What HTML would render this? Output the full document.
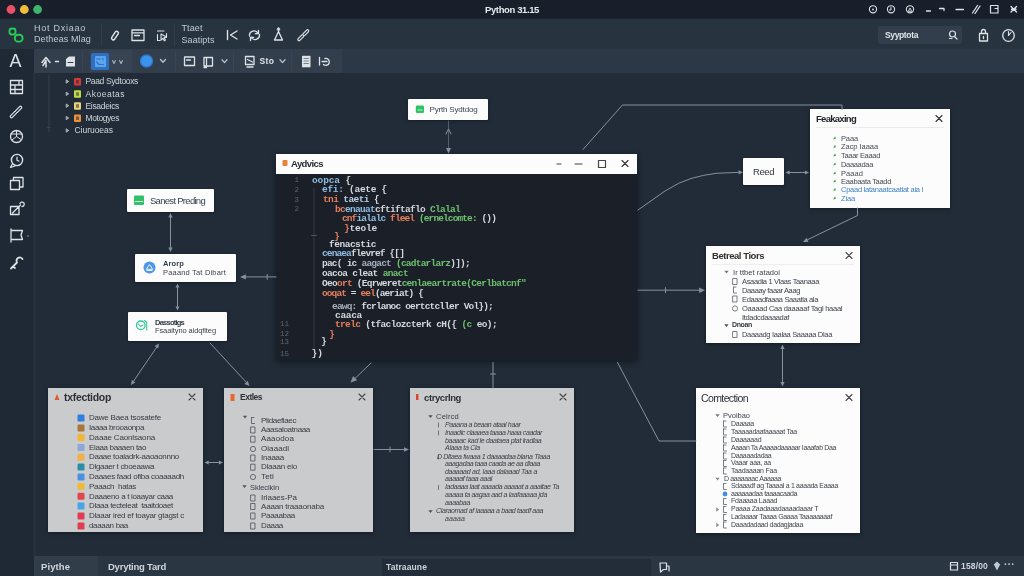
<!DOCTYPE html>
<html lang="en">
<head>
<meta charset="utf-8">
<title>Python 31.15</title>
<style>
html,body{margin:0;padding:0;background:#212c38;}
body{width:1024px;height:576px;overflow:hidden;position:relative;font-family:"Liberation Sans",sans-serif;}
#app{position:absolute;left:0;top:0;width:1024px;height:576px;overflow:hidden;background:#212c38;will-change:transform;}
#app>div{position:absolute;}
#app>svg{position:absolute;left:0;top:0;}
.t{position:absolute;white-space:pre;margin:0;padding:0;}
.m{font-family:"Liberation Mono",monospace;}
.s{font-family:"Liberation Sans",sans-serif;}
</style>
</head>
<body>
<div id="app">
<div style="left:0px;top:0px;width:1024px;height:18px;background:#181e2a;"></div>
<div style="left:0px;top:18px;width:1024px;height:31px;background:#27333f;"></div>
<div style="left:0px;top:17.5px;width:1024px;height:1.5px;background:#1c2430;"></div>
<div style="left:33px;top:49px;width:991px;height:24px;background:#2c3845;"></div>
<div style="left:33px;top:49px;width:309px;height:24px;background:#323e4c;"></div>
<div style="left:0px;top:49px;width:33.5px;height:527px;background:#1f2935;"></div>
<div style="left:33px;top:73px;width:2.5px;height:483px;background:#25303c;"></div>
<div style="left:34px;top:556px;width:990px;height:20px;background:#2b3643;"></div>
<div style="left:34px;top:556px;width:64px;height:20px;background:#323d4a;"></div>
<div style="left:381.5px;top:559px;width:269px;height:17px;background:#232d3a;border-radius:1px;"></div>
<div style="left:101px;top:23px;width:1px;height:23px;background:#313c49;"></div>
<div style="left:174px;top:23px;width:1px;height:23px;background:#313c49;"></div>
<div style="left:82px;top:51px;width:1px;height:20px;background:#3a4553;"></div>
<div style="left:175px;top:51px;width:1px;height:20px;background:#3a4553;"></div>
<div style="left:233px;top:51px;width:1px;height:20px;background:#3a4553;"></div>
<div style="left:291px;top:51px;width:1px;height:20px;background:#3a4553;"></div>
<div style="left:90px;top:50px;width:42px;height:22px;background:#384453;"></div>
<div style="left:90.5px;top:52.5px;width:18px;height:17px;background:#2f6fc2;border-radius:1.5px;"></div>
<div style="left:94.5px;top:56px;width:11.5px;height:11px;background:#5aa6ee;border-radius:1px;"></div>
<div style="left:878px;top:26px;width:84px;height:18px;background:#323e4c;border-radius:2px;"></div>
<div style="left:408px;top:99px;width:80px;height:21px;background:#fcfcfd;box-shadow:0 1px 3px rgba(0,0,0,.35);border-radius:1px;"></div>
<div style="left:127px;top:189px;width:87px;height:23px;background:#fcfcfd;box-shadow:0 1px 3px rgba(0,0,0,.35);border-radius:1px;"></div>
<div style="left:135px;top:254px;width:101px;height:28px;background:#fcfcfd;box-shadow:0 1px 3px rgba(0,0,0,.35);border-radius:1px;"></div>
<div style="left:128px;top:312px;width:99px;height:29px;background:#fcfcfd;box-shadow:0 1px 3px rgba(0,0,0,.35);border-radius:1px;"></div>
<div style="left:743px;top:158px;width:41px;height:27px;background:#fcfcfd;box-shadow:0 1px 3px rgba(0,0,0,.35);border-radius:1px;"></div>
<div style="left:48px;top:388px;width:155px;height:144px;background:#c9cbcd;box-shadow:0 1px 4px rgba(0,0,0,.4);"></div>
<div style="left:224px;top:388px;width:149px;height:144px;background:#c9cbcd;box-shadow:0 1px 4px rgba(0,0,0,.4);"></div>
<div style="left:410px;top:388px;width:164px;height:144px;background:#c9cbcd;box-shadow:0 1px 4px rgba(0,0,0,.4);"></div>
<div style="left:810px;top:109px;width:140px;height:99px;background:#fcfcfd;box-shadow:0 1px 4px rgba(0,0,0,.4);"></div>
<div style="left:816px;top:127px;width:128px;height:1px;background:#ececee;"></div>
<div style="left:706px;top:246px;width:154px;height:97px;background:#fcfcfd;box-shadow:0 1px 4px rgba(0,0,0,.4);"></div>
<div style="left:712px;top:264px;width:142px;height:1px;background:#eeeeef;"></div>
<div style="left:696px;top:388px;width:164px;height:145px;background:#fcfcfd;box-shadow:0 1px 4px rgba(0,0,0,.4);"></div>
<div style="left:276px;top:154px;width:361px;height:206px;background:#1b2028;box-shadow:0 2px 6px rgba(0,0,0,.45);"></div>
<div style="left:276px;top:154px;width:361px;height:20px;background:#fcfcfd;"></div>
<svg width="1024" height="576" viewBox="0 0 1024 576" fill="none">
<circle cx="11" cy="9.5" r="4.4" fill="#ec5068"/>
<circle cx="24.3" cy="9.5" r="4.4" fill="#f3bd3a"/>
<circle cx="37.6" cy="9.5" r="4.4" fill="#3fb56c"/>
<rect x="9.500" y="28.500" width="6" height="6" rx="2.500" stroke="#27cc55" stroke-width="1.900"/>
<rect x="14.800" y="34.800" width="7.800" height="6.800" rx="3.200" stroke="#27cc55" stroke-width="1.900"/>
<path d="M10.5 80.5h12v13h-12z M10.5 85h12 M10.5 89.5h12 M15 85v8.5 M19 80.5v4.5" stroke="#dde2e7" stroke-width="1.3" fill="none" stroke-linecap="round" stroke-linejoin="round" />
<path d="M11.5 116.5l4-4 M16.5 111.5l4-4" stroke="#dde2e7" stroke-width="3.6" fill="none" stroke-linecap="round" stroke-linejoin="round" />
<path d="M11.5 116.5l4-4 M16.5 111.5l4-4" stroke="#1f2935" stroke-width="1.2" fill="none" stroke-linecap="round" stroke-linejoin="round" />
<circle cx="16.5" cy="136.5" r="6" stroke="#dde2e7" stroke-width="1.3"/>
<path d="M16.5 130.5v6l4.5 3 M16.5 136.5l-4.5 3.5 M11 134h11" stroke="#dde2e7" stroke-width="1.0" fill="none" stroke-linecap="round" stroke-linejoin="round" />
<circle cx="17" cy="160" r="5.6" stroke="#dde2e7" stroke-width="1.4"/>
<path d="M12.5 163.5l-2 4 4.5-1.5 M17 157v3.2l2 1" stroke="#dde2e7" stroke-width="1.2" fill="none" stroke-linecap="round" stroke-linejoin="round" />
<path d="M10.5 180.5h9v9h-9z M13.5 180.5v-3h9.5v9.5h-3.500" stroke="#dde2e7" stroke-width="1.3" fill="none" stroke-linecap="round" stroke-linejoin="round" />
<path d="M10.5 206.5h8.500v8h-8.500z M12.500 213l8-8 M20 203.500a2.200 2.200 0 1 1 2 3" stroke="#dde2e7" stroke-width="1.3" fill="none" stroke-linecap="round" stroke-linejoin="round" />
<path d="M11 230.500h11.500l-1.500 4.500 1.500 4.500h-11.500z M11 229v13" stroke="#dde2e7" stroke-width="1.3" fill="none" stroke-linecap="round" stroke-linejoin="round" />
<path d="M11 268.500l6-6 M17 262.500a3.200 3.200 0 0 1 5.500-3.500 M13 266.500l2 1.500" stroke="#dde2e7" stroke-width="1.8" fill="none" stroke-linecap="round" stroke-linejoin="round" />
<circle cx="28" cy="236" r="0.8" fill="#dde2e7" opacity=".6"/>
<path d="M111.800 37.300l3.600-5.400a1.700 1.700 0 0 1 2.800 1.900l-3.600 5.400a1.700 1.700 0 0 1-2.800-1.900z" stroke="#dde2e7" stroke-width="1.5" fill="none" stroke-linecap="round" stroke-linejoin="round" />
<path d="M132 30h12v10.500h-12z M132 32.800h12 M134.500 35.500h5" stroke="#dde2e7" stroke-width="1.3" fill="none" stroke-linecap="round" stroke-linejoin="round" />
<path d="M157.500 31h6.500 M166.500 33.500v4 M160 40.500h-2.500v-6 M161 34l5.500 3-2.500.600 1.500 2.500-1.200.700-1.500-2.500-1.800 1.800z" stroke="#dde2e7" stroke-width="1.1" fill="none" stroke-linecap="round" stroke-linejoin="round" />
<path d="M227.500 30.500v9 M237 31l-6.500 4 6.500 4" stroke="#dde2e7" stroke-width="1.4" fill="none" stroke-linecap="round" stroke-linejoin="round" />
<path d="M249.500 36a4.500 4.500 0 0 1 8.500-2.500 M259.500 34.500a4.500 4.500 0 0 1-8.500 2.500 M258.500 30.500v3.200h-3.200 M250.500 40.500v-3.200h3.200" stroke="#dde2e7" stroke-width="1.3" fill="none" stroke-linecap="round" stroke-linejoin="round" />
<path d="M278.500 31.500l-4 8.500h8z M278.500 28.200v3.300 M274.500 40h8" stroke="#dde2e7" stroke-width="1.3" fill="none" stroke-linecap="round" stroke-linejoin="round" />
<circle cx="278.500" cy="29.200" r="1.300" stroke="#dde2e7" stroke-width="1"/>
<path d="M299 39.500l3.500-3.500 M304 34.500l3.500-3.500" stroke="#dde2e7" stroke-width="3.6" fill="none" stroke-linecap="round" stroke-linejoin="round" />
<path d="M299 39.500l3.500-3.500 M304 34.500l3.500-3.500" stroke="#27333f" stroke-width="1.2" fill="none" stroke-linecap="round" stroke-linejoin="round" />
<path d="M46 67v-6.500 M42 62.500l4-5 4 5 M46 60.500l-3 5" stroke="#dde2e7" stroke-width="1.5" fill="none" stroke-linecap="round" stroke-linejoin="round" />
<path d="M55.500 61.500h3" stroke="#dde2e7" stroke-width="1.4" fill="none" stroke-linecap="round" stroke-linejoin="round" />
<path d="M66 59l3-2.500h6v10h-9z" fill="#dde2e7"/>
<path d="M68 62.500h5" stroke="#323e4c" stroke-width="1.0" fill="none" stroke-linecap="round" stroke-linejoin="round" />
<path d="M96.500 59h4 M96.500 62l2.500 2.500h4.500 M103 58v2" stroke="#2f6fc2" stroke-width="1.1" fill="none" stroke-linecap="round" stroke-linejoin="round" />
<path d="M112.500 60.500l1.500 3 1.500-3 M119.500 60.500l1.500 3 1.500-3" stroke="#aab3bd" stroke-width="1.1" fill="none" stroke-linecap="round" stroke-linejoin="round" />
<circle cx="146.500" cy="61" r="6.100" fill="#3b93ee" stroke="#2d74c8" stroke-width="1.200"/>
<path d="M160.500 59.500l2.500 2.800 2.500-2.800" stroke="#b8c0c9" stroke-width="1.3" fill="none" stroke-linecap="round" stroke-linejoin="round" />
<path d="M184.500 57h10v8.500h-10z M186.500 60h4" stroke="#dde2e7" stroke-width="1.3" fill="none" stroke-linecap="round" stroke-linejoin="round" />
<path d="M204 57.500h8.500v8.500h-8.500z M206.500 57.500v10 M206.500 67.500h-2.500" stroke="#dde2e7" stroke-width="1.3" fill="none" stroke-linecap="round" stroke-linejoin="round" />
<path d="M222 59.800l2.500 2.800 2.500-2.800" stroke="#b8c0c9" stroke-width="1.3" fill="none" stroke-linecap="round" stroke-linejoin="round" />
<path d="M245.500 56.500h8.500v8h-8.500z M247.500 59.500l5 2.500 M247 67h6" stroke="#dde2e7" stroke-width="1.3" fill="none" stroke-linecap="round" stroke-linejoin="round" />
<path d="M280 59.800l2.500 2.800 2.500-2.800" stroke="#b8c0c9" stroke-width="1.3" fill="none" stroke-linecap="round" stroke-linejoin="round" />
<path d="M302 55.800h8.500v11.500h-8.500z" fill="#dde2e7"/>
<path d="M304 58.500h4.500 M304 61h4.500 M304 63.500h4.500" stroke="#6c7783" stroke-width="0.9" fill="none" stroke-linecap="round" stroke-linejoin="round" />
<path d="M319.500 57.500v7.500 M322 61.500h5 M325 58.500a3.500 3.500 0 1 1-1.500 6" stroke="#dde2e7" stroke-width="1.3" fill="none" stroke-linecap="round" stroke-linejoin="round" />
<circle cx="873" cy="9.300" r="3.600" stroke="#dde2e7" stroke-width="1.100"/>
<circle cx="891" cy="9.300" r="3.600" stroke="#dde2e7" stroke-width="1.100"/>
<circle cx="910" cy="9.300" r="3.600" stroke="#dde2e7" stroke-width="1.100"/>
<circle cx="873" cy="9.500" r="0.900" fill="#dde2e7"/>
<path d="M891 7.500v2.500h-1.500" stroke="#dde2e7" stroke-width="1.0" fill="none" stroke-linecap="round" stroke-linejoin="round" />
<path d="M908.500 11l1.500-3 1.500 3z" stroke="#dde2e7" stroke-width="0.9" fill="none" stroke-linecap="round" stroke-linejoin="round" />
<path d="M926.500 11h4 M939.500 8.500h4.500v2 M956 9.500h7.500" stroke="#dde2e7" stroke-width="1.3" fill="none" stroke-linecap="round" stroke-linejoin="round" />
<path d="M972.500 13l5-7.500 M975 13.500l5-7.500" stroke="#dde2e7" stroke-width="1.3" fill="none" stroke-linecap="round" stroke-linejoin="round" />
<path d="M990.500 5.500h7.500v7.500h-7.500z M995 8.500h3" stroke="#dde2e7" stroke-width="1.2" fill="none" stroke-linecap="round" stroke-linejoin="round" />
<path d="M1011 6.500l5.500 5.500 M1016.500 6.500l-5.500 5.500 M1011.500 9.300h4.500" stroke="#dde2e7" stroke-width="1.4" fill="none" stroke-linecap="round" stroke-linejoin="round" />
<circle cx="952.500" cy="34" r="3" stroke="#dde2e7" stroke-width="1.200"/>
<path d="M954.500 36.500l2.500 2.500 M949.500 38.500h2.500" stroke="#dde2e7" stroke-width="1.2" fill="none" stroke-linecap="round" stroke-linejoin="round" />
<path d="M979.500 33.500h8v7.500h-8z M981.500 33.500v-2a2 2 0 0 1 4 0v2 M983.500 36.500v2" stroke="#dde2e7" stroke-width="1.3" fill="none" stroke-linecap="round" stroke-linejoin="round" />
<circle cx="1008.500" cy="35.500" r="5.800" stroke="#dde2e7" stroke-width="1.300"/>
<path d="M1008.500 35.500v-4 M1008.500 35.500l2.500-3" stroke="#dde2e7" stroke-width="1.1" fill="none" stroke-linecap="round" stroke-linejoin="round" />
<path d="M660 563h6.500v6.500h-3l-3 2.500z M666.500 566h2.500v5" stroke="#dde2e7" stroke-width="1.2" fill="none" stroke-linecap="round" stroke-linejoin="round" />
<path d="M950.500 562.500h7v7.500h-7z M950.500 565h7" stroke="#dde2e7" stroke-width="1.2" fill="none" stroke-linecap="round" stroke-linejoin="round" />
<path d="M997 561.500l3.200 3-3.200 6-3.200-6z" fill="#c2c9d0"/>
<path d="M49 75v57 M47.500 127.500h3" stroke="#3d4855" stroke-width="0.8" fill="none" stroke-linecap="round" stroke-linejoin="round" />
<path d="M66.5 80.0l2.200 1.500-2.200 1.500z" stroke="#aab2bb" stroke-width="0.9" fill="#aab2bb" stroke-linecap="round" stroke-linejoin="round" />
<rect x="74" y="78.0" width="7" height="7.500" rx="1" fill="#d8383a"/>
<rect x="76" y="80.0" width="3" height="3.500" fill="#212c38" opacity=".55"/>
<path d="M66.5 92.3l2.200 1.500-2.200 1.500z" stroke="#aab2bb" stroke-width="0.9" fill="#aab2bb" stroke-linecap="round" stroke-linejoin="round" />
<rect x="74" y="90.3" width="7" height="7.500" rx="1" fill="#c5dc48"/>
<rect x="76" y="92.3" width="3" height="3.500" fill="#212c38" opacity=".55"/>
<path d="M66.5 104.2l2.200 1.500-2.200 1.500z" stroke="#aab2bb" stroke-width="0.9" fill="#aab2bb" stroke-linecap="round" stroke-linejoin="round" />
<rect x="74" y="102.2" width="7" height="7.500" rx="1" fill="#ecd07a"/>
<rect x="76" y="104.2" width="3" height="3.500" fill="#212c38" opacity=".55"/>
<path d="M66.5 116.5l2.200 1.500-2.200 1.500z" stroke="#aab2bb" stroke-width="0.9" fill="#aab2bb" stroke-linecap="round" stroke-linejoin="round" />
<rect x="74" y="114.5" width="7" height="7.500" rx="1" fill="#f0903a"/>
<rect x="76" y="116.5" width="3" height="3.500" fill="#212c38" opacity=".55"/>
<path d="M66.5 129.0l2.200 1.500-2.200 1.500z" stroke="#aab2bb" stroke-width="0.9" fill="#aab2bb" stroke-linecap="round" stroke-linejoin="round" />
<path d="M448.500 120.500V148" stroke="#8491a0" stroke-width="0.900" opacity=".55"/>
<path d="M446 134l2.500-5 2.500 5" stroke="#8491a0" stroke-width="1.0" fill="none" stroke-linecap="round" stroke-linejoin="round"/>
<path d="M448.5 153.5L446.0 148.1L451.0 148.1z" fill="#8491a0"/>
<path d="M583 149.500l39.500-44.500h219.500v4.500" stroke="#8491a0" stroke-width="1.0" fill="none" stroke-linecap="round" stroke-linejoin="round"/>
<path d="M638 210L665 191Q679 182 691 178.500T716 173.300L738 172.400" stroke="#8491a0" stroke-width="1.0" fill="none" stroke-linecap="round" stroke-linejoin="round"/>
<path d="M743.0 172.3L738.5 174.4L738.5 170.2z" fill="#8491a0"/>
<path d="M788 172.500h18" stroke="#8491a0" stroke-width="1.0" fill="none" stroke-linecap="round" stroke-linejoin="round"/>
<path d="M785.5 172.5L789.6 170.6L789.6 174.4z" fill="#8491a0"/>
<path d="M809.0 172.5L804.9 174.4L804.9 170.6z" fill="#8491a0"/>
<path d="M857.500 208v7.500L806 240.500" stroke="#8491a0" stroke-width="1.0" fill="none" stroke-linecap="round" stroke-linejoin="round"/>
<path d="M803.0 242.0L806.5 237.7L808.5 241.9z" fill="#8491a0"/>
<path d="M638 290.200h62 M665.500 287.700v5" stroke="#8491a0" stroke-width="1.0" fill="none" stroke-linecap="round" stroke-linejoin="round"/>
<path d="M705.0 290.2L699.1 292.9L699.1 287.5z" fill="#8491a0"/>
<path d="M782.500 347v37" stroke="#8491a0" stroke-width="1.0" fill="none" stroke-linecap="round" stroke-linejoin="round"/>
<path d="M782.5 344.5L784.6 349.0L780.4 349.0z" fill="#8491a0"/>
<path d="M782.5 386.5L780.4 382.0L784.6 382.0z" fill="#8491a0"/>
<path d="M617.500 362.500L659 441H696" stroke="#8491a0" stroke-width="1.0" fill="none" stroke-linecap="round" stroke-linejoin="round"/>
<path d="M493 362.500V388 M490.500 374h5" stroke="#8491a0" stroke-width="1.0" fill="none" stroke-linecap="round" stroke-linejoin="round"/>
<path d="M371 363L354 379.500" stroke="#8491a0" stroke-width="1.0" fill="none" stroke-linecap="round" stroke-linejoin="round"/>
<path d="M350.5 382.5L353.1 376.0L357.2 380.3z" fill="#8491a0"/>
<path d="M276 276.900h-31 M267.200 274.400v5" stroke="#8491a0" stroke-width="1.0" fill="none" stroke-linecap="round" stroke-linejoin="round"/>
<path d="M240.0 276.9L245.9 274.2L245.9 279.6z" fill="#8491a0"/>
<path d="M170.500 216v32" stroke="#8491a0" stroke-width="1.0" fill="none" stroke-linecap="round" stroke-linejoin="round"/>
<path d="M170.5 213.0L172.6 217.5L168.4 217.5z" fill="#8491a0"/>
<path d="M170.5 252.0L168.4 247.5L172.6 247.5z" fill="#8491a0"/>
<path d="M177.500 285v24" stroke="#8491a0" stroke-width="1.0" fill="none" stroke-linecap="round" stroke-linejoin="round"/>
<path d="M177.5 283.5L179.4 287.6L175.6 287.6z" fill="#8491a0"/>
<path d="M177.5 310.5L175.6 306.4L179.4 306.4z" fill="#8491a0"/>
<path d="M157.500 346L133 382" stroke="#8491a0" stroke-width="1.0" fill="none" stroke-linecap="round" stroke-linejoin="round"/>
<path d="M159.0 343.5L158.2 348.4L154.7 346.1z" fill="#8491a0"/>
<path d="M131.0 385.0L131.8 380.1L135.3 382.4z" fill="#8491a0"/>
<path d="M210 343l37 40" stroke="#8491a0" stroke-width="1.0" fill="none" stroke-linecap="round" stroke-linejoin="round"/>
<path d="M249.5 386.0L244.4 383.9L247.8 380.8z" fill="#8491a0"/>
<path d="M207 462.500h14" stroke="#8491a0" stroke-width="1.0" fill="none" stroke-linecap="round" stroke-linejoin="round"/>
<path d="M204.5 462.5L208.6 460.6L208.6 464.4z" fill="#8491a0"/>
<path d="M223.0 462.5L218.9 464.4L218.9 460.6z" fill="#8491a0"/>
<path d="M374 449.500h31 M390 447v5" stroke="#8491a0" stroke-width="1.0" fill="none" stroke-linecap="round" stroke-linejoin="round"/>
<path d="M409.0 449.5L404.0 451.8L404.0 447.2z" fill="#8491a0"/>
<rect x="415.800" y="105.500" width="8.200" height="7.600" rx="1.300" fill="#2fc266"/>
<path d="M418 110h4" stroke="#bff0cf" stroke-width="1.1" fill="none" stroke-linecap="round" stroke-linejoin="round" />
<rect x="134" y="195.500" width="10" height="9.500" rx="1" fill="#2fc266"/>
<path d="M135.500 201.500h7" stroke="#e9fbef" stroke-width="1.2" fill="none" stroke-linecap="round" stroke-linejoin="round" />
<circle cx="149.500" cy="267.500" r="6" fill="#4d97e8"/>
<path d="M146.500 269l3-4.500 3 4.500z M147 270.500h5" stroke="#e6f1fc" stroke-width="1.0" fill="none" stroke-linecap="round" stroke-linejoin="round" />
<circle cx="140.800" cy="325.300" r="4.300" stroke="#35c79a" stroke-width="1.300"/>
<path d="M144.500 320.500l2.200 2v7.500 M138.500 324l2 2.500 2.500-1.500" stroke="#35c79a" stroke-width="1.1" fill="none" stroke-linecap="round" stroke-linejoin="round" />
<path d="M54.500 400l2.500-6 2.500 6z" fill="#e5582f"/>
<path d="M189 394l6 6 M195 394l-6 6" stroke="#444" stroke-width="1.1" fill="none" stroke-linecap="round" stroke-linejoin="round" />
<rect x="77.500" y="414.5" width="7" height="7" rx="1.200" fill="#2f7fe0"/>
<rect x="77.500" y="424.5" width="7" height="7" rx="1.200" fill="#a9773a"/>
<rect x="77.500" y="434.0" width="7" height="7" rx="1.200" fill="#f2b632"/>
<rect x="77.500" y="444.0" width="7" height="7" rx="1.200" fill="#8fa6d8"/>
<rect x="77.500" y="453.7" width="7" height="7" rx="1.200" fill="#f0b04a"/>
<rect x="77.500" y="463.5" width="7" height="7" rx="1.200" fill="#2c8ea6"/>
<rect x="77.500" y="473.5" width="7" height="7" rx="1.200" fill="#4a90e2"/>
<rect x="77.500" y="483.0" width="7" height="7" rx="1.200" fill="#f0b93a"/>
<rect x="77.500" y="492.8" width="7" height="7" rx="1.200" fill="#e0474c"/>
<rect x="77.500" y="502.5" width="7" height="7" rx="1.200" fill="#45a5e6"/>
<rect x="77.500" y="512.5" width="7" height="7" rx="1.200" fill="#e23c50"/>
<rect x="77.500" y="522.5" width="7" height="7" rx="1.200" fill="#e23c50"/>
<path d="M230.500 394h4v7h-4z" fill="#e5682f"/>
<path d="M359 394l6 6 M365 394l-6 6" stroke="#444" stroke-width="1.1" fill="none" stroke-linecap="round" stroke-linejoin="round" />
<path d="M242.8 415.8h4.400l-2.200 2.800z" fill="#555"/>
<path d="M251.5 417.5v6h3 M251.5 417.5h2.500" stroke="#5a5f66" stroke-width="0.9" fill="none" stroke-linecap="round" stroke-linejoin="round" />
<path d="M251 427h4v6h-4z" stroke="#5a5f66" stroke-width="0.9" fill="none" stroke-linecap="round" stroke-linejoin="round" />
<path d="M251 436.2h4v6h-4z" stroke="#5a5f66" stroke-width="0.9" fill="none" stroke-linecap="round" stroke-linejoin="round" />
<circle cx="253" cy="449" r="2.600" stroke="#5a5f66" stroke-width="0.900"/>
<path d="M251 455h4v6h-4z" stroke="#5a5f66" stroke-width="0.9" fill="none" stroke-linecap="round" stroke-linejoin="round" />
<path d="M251 464.2h4v6h-4z" stroke="#5a5f66" stroke-width="0.9" fill="none" stroke-linecap="round" stroke-linejoin="round" />
<circle cx="253" cy="477" r="2.600" stroke="#5a5f66" stroke-width="0.900"/>
<path d="M242.3 485.3h4.400l-2.200 2.800z" fill="#555"/>
<path d="M251 495h4v6h-4z" stroke="#5a5f66" stroke-width="0.9" fill="none" stroke-linecap="round" stroke-linejoin="round" />
<path d="M251 503.5h4v6h-4z" stroke="#5a5f66" stroke-width="0.9" fill="none" stroke-linecap="round" stroke-linejoin="round" />
<path d="M251 513h4v6h-4z" stroke="#5a5f66" stroke-width="0.9" fill="none" stroke-linecap="round" stroke-linejoin="round" />
<path d="M251 523h4v6h-4z" stroke="#5a5f66" stroke-width="0.9" fill="none" stroke-linecap="round" stroke-linejoin="round" />
<path d="M416 394h2.500v6h-2.500z" fill="#d8482f"/>
<path d="M560 394l6 6 M566 394l-6 6" stroke="#444" stroke-width="1.1" fill="none" stroke-linecap="round" stroke-linejoin="round" />
<path d="M428.3 415.3h4.400l-2.200 2.800z" fill="#555"/>
<path d="M428.3 510.3h4.400l-2.200 2.800z" fill="#555"/>
<path d="M438.500 423v4" stroke="#666" stroke-width="0.9" fill="none" stroke-linecap="round" stroke-linejoin="round" />
<path d="M438.500 431v4" stroke="#666" stroke-width="0.9" fill="none" stroke-linecap="round" stroke-linejoin="round" />
<path d="M438.500 455v4" stroke="#666" stroke-width="0.9" fill="none" stroke-linecap="round" stroke-linejoin="round" />
<path d="M438.500 485.5v4" stroke="#666" stroke-width="0.9" fill="none" stroke-linecap="round" stroke-linejoin="round" />
<path d="M936 115.5l6 6 M942 115.5l-6 6" stroke="#333" stroke-width="1.1" fill="none" stroke-linecap="round" stroke-linejoin="round" />
<path d="M833 139.5l2.200-3.200 .8 2.400z" fill="#4da65a"/>
<path d="M833 148.0l2.200-3.200 .8 2.400z" fill="#4da65a"/>
<path d="M833 156.5l2.200-3.200 .8 2.400z" fill="#4da65a"/>
<path d="M833 165.5l2.200-3.200 .8 2.400z" fill="#4da65a"/>
<path d="M833 174.5l2.200-3.200 .8 2.400z" fill="#4da65a"/>
<path d="M833 182.5l2.200-3.200 .8 2.400z" fill="#4da65a"/>
<path d="M833 191.0l2.200-3.200 .8 2.400z" fill="#4da65a"/>
<path d="M833 199.5l2.200-3.200 .8 2.400z" fill="#4da65a"/>
<path d="M846 252.5l6 6 M852 252.5l-6 6" stroke="#444" stroke-width="1.1" fill="none" stroke-linecap="round" stroke-linejoin="round" />
<path d="M724.3 270.8h4.400l-2.200 2.800z" fill="#777"/>
<path d="M733 278.5h4v6h-4z" stroke="#6a6f77" stroke-width="0.9" fill="none" stroke-linecap="round" stroke-linejoin="round" />
<path d="M733.5 287v6h3 M733.5 287h2.500" stroke="#6a6f77" stroke-width="0.9" fill="none" stroke-linecap="round" stroke-linejoin="round" />
<path d="M733 296h4v6h-4z" stroke="#6a6f77" stroke-width="0.9" fill="none" stroke-linecap="round" stroke-linejoin="round" />
<circle cx="735" cy="308.5" r="2.600" stroke="#6a6f77" stroke-width="0.900"/>
<path d="M733 331.5h4v6h-4z" stroke="#6a6f77" stroke-width="0.9" fill="none" stroke-linecap="round" stroke-linejoin="round" />
<path d="M724.3 324.3h4.400l-2.200 2.800z" fill="#555"/>
<path d="M846 394.5l6 6 M852 394.5l-6 6" stroke="#444" stroke-width="1.1" fill="none" stroke-linecap="round" stroke-linejoin="round" />
<path d="M715.3 414.3h4.400l-2.200 2.800z" fill="#777"/>
<path d="M723.5 421v6h3 M723.5 421h2.500" stroke="#6a6f77" stroke-width="0.9" fill="none" stroke-linecap="round" stroke-linejoin="round" />
<path d="M723.5 429v6h3 M723.5 429h2.500" stroke="#6a6f77" stroke-width="0.9" fill="none" stroke-linecap="round" stroke-linejoin="round" />
<path d="M723.5 437v6h3 M723.5 437h2.500" stroke="#6a6f77" stroke-width="0.9" fill="none" stroke-linecap="round" stroke-linejoin="round" />
<path d="M723.5 445v6h3 M723.5 445h2.500" stroke="#6a6f77" stroke-width="0.9" fill="none" stroke-linecap="round" stroke-linejoin="round" />
<path d="M723.5 453v6h3 M723.5 453h2.500" stroke="#6a6f77" stroke-width="0.9" fill="none" stroke-linecap="round" stroke-linejoin="round" />
<path d="M723.5 460.5v6h3 M723.5 460.5h2.500" stroke="#6a6f77" stroke-width="0.9" fill="none" stroke-linecap="round" stroke-linejoin="round" />
<path d="M723.5 468v6h3 M723.5 468h2.500" stroke="#6a6f77" stroke-width="0.9" fill="none" stroke-linecap="round" stroke-linejoin="round" />
<path d="M715.3 477.8h4.400l-2.200 2.800z" fill="#888"/>
<path d="M723.5 483.5v6h3 M723.5 483.5h2.500" stroke="#6a6f77" stroke-width="0.9" fill="none" stroke-linecap="round" stroke-linejoin="round" />
<circle cx="725" cy="494" r="2.400" fill="#3f8fe0"/>
<path d="M723.5 498.5v6h3 M723.5 498.5h2.500" stroke="#6a6f77" stroke-width="0.9" fill="none" stroke-linecap="round" stroke-linejoin="round" />
<path d="M723.5 506.5v6h3 M723.5 506.5h2.500" stroke="#6a6f77" stroke-width="0.9" fill="none" stroke-linecap="round" stroke-linejoin="round" />
<path d="M716.3 507.3v4.400l2.800-2.200z" fill="#888"/>
<path d="M723.5 514.5v6h3 M723.5 514.5h2.500" stroke="#6a6f77" stroke-width="0.9" fill="none" stroke-linecap="round" stroke-linejoin="round" />
<path d="M723.5 522v6h3 M723.5 522h2.500" stroke="#6a6f77" stroke-width="0.9" fill="none" stroke-linecap="round" stroke-linejoin="round" />
<path d="M716.3 522.8v4.400l2.800-2.200z" fill="#888"/>
<rect x="282.500" y="160" width="5" height="6" rx="1" fill="#e5843a"/>
<path d="M557 164h4 M575 164h7 M598.500 160.500h7v7h-7z" stroke="#444" stroke-width="1.2" fill="none" stroke-linecap="round" stroke-linejoin="round" />
<path d="M622 160.5l6 6 M628 160.5l-6 6" stroke="#333" stroke-width="1.1" fill="none" stroke-linecap="round" stroke-linejoin="round" />
<path d="M314 188v162" stroke="#3b434d" stroke-width="0.8" fill="none" stroke-linecap="round" stroke-linejoin="round" />
<path d="M311.500 235.500h5" stroke="#56606b" stroke-width="0.8" fill="none" stroke-linecap="round" stroke-linejoin="round" />
</svg>
<span class="t s" style="left:485px;top:4.3px;font-size:9.5px;line-height:11.4px;font-weight:700;letter-spacing:-0.384px;color:#e8ebef;">Python 31.15</span>
<span class="t s" style="left:34px;top:22.9px;font-size:9px;line-height:10.8px;letter-spacing:0.747px;color:#c2c9d0;">Hot Dxiaao</span>
<span class="t s" style="left:34px;top:34.4px;font-size:9px;line-height:10.8px;letter-spacing:0.122px;color:#c2c9d0;">Detheas Mlag</span>
<span class="t s" style="left:181.5px;top:23.1px;font-size:9px;line-height:10.8px;letter-spacing:0.097px;color:#c2c9d0;">Ttaet</span>
<span class="t s" style="left:181.5px;top:34.6px;font-size:9px;line-height:10.8px;letter-spacing:0.059px;color:#c2c9d0;">Saatipts</span>
<span class="t s" style="left:259.5px;top:56.4px;font-size:8.5px;line-height:10.2px;font-weight:700;letter-spacing:0.432px;color:#dfe3e8;">Sto</span>
<span class="t s" style="left:885px;top:29.9px;font-size:8.5px;line-height:10.2px;font-weight:700;letter-spacing:-0.363px;color:#dfe3e8;">Syyptota</span>
<span class="t s" style="left:41px;top:560.8px;font-size:9.5px;line-height:11.4px;font-weight:700;letter-spacing:0.081px;color:#d0d5db;">Piythe</span>
<span class="t s" style="left:108px;top:560.8px;font-size:9.5px;line-height:11.4px;font-weight:700;letter-spacing:-0.236px;color:#d0d5db;">Dyryting Tard</span>
<span class="t s" style="left:386px;top:561.9px;font-size:8.5px;line-height:10.2px;font-weight:700;letter-spacing:0.111px;color:#cdd3d9;">Tatraaune</span>
<span class="t s" style="left:961px;top:561.4px;font-size:8.5px;line-height:10.2px;font-weight:700;letter-spacing:0.167px;color:#cdd3d9;">158/00</span>
<span class="t s" style="left:1004px;top:559.0px;font-size:10px;line-height:12.0px;font-weight:700;letter-spacing:0.333px;color:#c2c9d0;">···</span>
<span class="t s" style="left:9.5px;top:51.2px;font-size:18px;line-height:21.6px;letter-spacing:1.984px;color:#dde2e7;">A</span>
<span class="t s" style="left:85.5px;top:76.4px;font-size:8.5px;line-height:10.2px;letter-spacing:-0.361px;color:#cfd5db;">Paad Sydtooxs</span>
<span class="t s" style="left:85.5px;top:88.7px;font-size:8.5px;line-height:10.2px;letter-spacing:0.506px;color:#cfd5db;">Akoeatas</span>
<span class="t s" style="left:85.5px;top:100.6px;font-size:8.5px;line-height:10.2px;letter-spacing:-0.321px;color:#cfd5db;">Eisadeics</span>
<span class="t s" style="left:85.5px;top:112.9px;font-size:8.5px;line-height:10.2px;letter-spacing:-0.42px;color:#cfd5db;">Motogyes</span>
<span class="t s" style="left:74.5px;top:125.4px;font-size:8.5px;line-height:10.2px;letter-spacing:-0.028px;color:#cfd5db;">Ciuruoeas</span>
<span class="t s" style="left:429.5px;top:104.7px;font-size:8px;line-height:9.6px;letter-spacing:-0.173px;color:#3a4450;">Pyrth Sydtdog</span>
<span class="t s" style="left:150px;top:194.8px;font-size:9.5px;line-height:11.4px;letter-spacing:-0.712px;color:#3a4450;">Sanest Preding</span>
<span class="t s" style="left:163px;top:259.0px;font-size:7.5px;line-height:9.0px;font-weight:700;letter-spacing:0.116px;color:#333c47;">Arorp</span>
<span class="t s" style="left:163px;top:268.0px;font-size:7.5px;line-height:9.0px;letter-spacing:0.182px;color:#3f4650;">Paaand Tat Dibart</span>
<span class="t s" style="left:155px;top:317.8px;font-size:7.5px;line-height:9.0px;font-weight:700;letter-spacing:-0.762px;color:#333c47;">Dassotigs</span>
<span class="t s" style="left:155px;top:326.0px;font-size:7.5px;line-height:9.0px;letter-spacing:-0.104px;color:#3f4650;">Fsaaityno aidqfiteg</span>
<span class="t s" style="left:753px;top:166.3px;font-size:9.5px;line-height:11.4px;letter-spacing:-0.43px;color:#30353c;">Reed</span>
<span class="t s" style="left:64px;top:391.2px;font-size:10.5px;line-height:12.6px;font-weight:700;letter-spacing:-0.317px;color:#2c3036;">txfectidop</span>
<span class="t s" style="left:89px;top:413.2px;font-size:8px;line-height:9.6px;letter-spacing:-0.213px;color:#383b41;">Dawe Baea tsosatefe</span>
<span class="t s" style="left:89px;top:423.2px;font-size:8px;line-height:9.6px;letter-spacing:-0.367px;color:#383b41;">Iaaaa brooaonpa</span>
<span class="t s" style="left:89px;top:432.7px;font-size:8px;line-height:9.6px;letter-spacing:-0.156px;color:#383b41;">Daaae Caonlsaona</span>
<span class="t s" style="left:89px;top:442.7px;font-size:8px;line-height:9.6px;letter-spacing:-0.358px;color:#383b41;">Eiaaa baaaen tao</span>
<span class="t s" style="left:89px;top:452.4px;font-size:8px;line-height:9.6px;letter-spacing:-0.29px;color:#383b41;">Daaae toaladrk-aaoaonnno</span>
<span class="t s" style="left:89px;top:462.2px;font-size:8px;line-height:9.6px;letter-spacing:-0.33px;color:#383b41;">Dlgaaer t cboeaawa  </span>
<span class="t s" style="left:89px;top:472.2px;font-size:8px;line-height:9.6px;letter-spacing:-0.281px;color:#383b41;">Daaaes faad ofiba coaaaadh</span>
<span class="t s" style="left:89px;top:481.7px;font-size:8px;line-height:9.6px;letter-spacing:-0.32px;color:#383b41;">Paaach  hatas</span>
<span class="t s" style="left:89px;top:491.5px;font-size:8px;line-height:9.6px;letter-spacing:-0.318px;color:#383b41;">Daaaeno a t ioaayar caaa</span>
<span class="t s" style="left:89px;top:501.2px;font-size:8px;line-height:9.6px;letter-spacing:-0.332px;color:#383b41;">Dlaaa tecteleat  taaitdoaet</span>
<span class="t s" style="left:89px;top:511.2px;font-size:8px;line-height:9.6px;letter-spacing:-0.257px;color:#383b41;">Dlaaar ired ef toayar gtagst c</span>
<span class="t s" style="left:89px;top:521.2px;font-size:8px;line-height:9.6px;letter-spacing:-0.327px;color:#383b41;">daaaan baa</span>
<span class="t s" style="left:240px;top:392.4px;font-size:8.5px;line-height:10.2px;font-weight:700;letter-spacing:-0.508px;color:#2c3036;">Extles</span>
<span class="t s" style="left:261px;top:415.7px;font-size:8px;line-height:9.6px;letter-spacing:-0.376px;color:#383b41;">Piidaefiaec</span>
<span class="t s" style="left:261px;top:425.2px;font-size:8px;line-height:9.6px;letter-spacing:-0.338px;color:#383b41;">Aaasaloatnaaa</span>
<span class="t s" style="left:261px;top:434.4px;font-size:8px;line-height:9.6px;letter-spacing:0.138px;color:#383b41;">Aaaodoa</span>
<span class="t s" style="left:261px;top:444.2px;font-size:8px;line-height:9.6px;letter-spacing:0.06px;color:#383b41;">Oiaaadl</span>
<span class="t s" style="left:261px;top:453.2px;font-size:8px;line-height:9.6px;letter-spacing:-0.245px;color:#383b41;">Inaaaa</span>
<span class="t s" style="left:261px;top:462.4px;font-size:8px;line-height:9.6px;letter-spacing:-0.225px;color:#383b41;">Dlaaan eio</span>
<span class="t s" style="left:261px;top:472.2px;font-size:8px;line-height:9.6px;letter-spacing:0.137px;color:#383b41;">Tetl</span>
<span class="t s" style="left:250px;top:482.5px;font-size:7.5px;line-height:9.0px;letter-spacing:-0.066px;color:#3c4148;">Sklecikin</span>
<span class="t s" style="left:261px;top:493.2px;font-size:8px;line-height:9.6px;letter-spacing:-0.047px;color:#383b41;">Irlaaes-Pa</span>
<span class="t s" style="left:261px;top:501.7px;font-size:8px;line-height:9.6px;letter-spacing:-0.178px;color:#383b41;">Aaaan traaaonaba</span>
<span class="t s" style="left:261px;top:511.2px;font-size:8px;line-height:9.6px;letter-spacing:-0.311px;color:#383b41;">Paaaabaa</span>
<span class="t s" style="left:261px;top:521.2px;font-size:8px;line-height:9.6px;letter-spacing:-0.316px;color:#383b41;">Daaaa</span>
<span class="t s" style="left:424px;top:392.3px;font-size:9.5px;line-height:11.4px;font-weight:700;letter-spacing:-0.406px;color:#2c3036;">ctrycrlng</span>
<span class="t s" style="left:436px;top:412.0px;font-size:7.5px;line-height:9.0px;letter-spacing:0.219px;color:#3c4148;">Celrcd</span>
<span class="t s" style="left:445px;top:420.8px;font-size:7px;line-height:8.4px;font-style:italic;letter-spacing:-0.362px;color:#3c4046;">Paaana a beaan ataal haar </span>
<span class="t s" style="left:445px;top:428.8px;font-size:7px;line-height:8.4px;font-style:italic;letter-spacing:-0.375px;color:#3c4046;">Inaadic claaaea taaaa haaa caadar</span>
<span class="t s" style="left:445px;top:436.8px;font-size:7px;line-height:8.4px;font-style:italic;letter-spacing:-0.325px;color:#3c4046;">baaaac kad le daataea ptat lradlaa </span>
<span class="t s" style="left:445px;top:444.3px;font-size:7px;line-height:8.4px;font-style:italic;letter-spacing:-0.262px;color:#3c4046;">Alaaa ta Cla</span>
<span class="t s" style="left:437px;top:452.8px;font-size:7px;line-height:8.4px;font-style:italic;letter-spacing:-0.333px;color:#3c4046;">D Dltaea fwaaa 1 daaaadaa blana Tlaaa</span>
<span class="t s" style="left:445px;top:460.3px;font-size:7px;line-height:8.4px;font-style:italic;letter-spacing:-0.363px;color:#3c4046;">aaagadaa taaa caada ae aa dlaaa</span>
<span class="t s" style="left:445px;top:467.8px;font-size:7px;line-height:8.4px;font-style:italic;letter-spacing:-0.272px;color:#3c4046;">daaaaad ad, laaa dalaaad Taa a</span>
<span class="t s" style="left:445px;top:475.3px;font-size:7px;line-height:8.4px;font-style:italic;letter-spacing:-0.323px;color:#3c4046;">aaaaaf taaa aaal</span>
<span class="t s" style="left:445px;top:483.3px;font-size:7px;line-height:8.4px;font-style:italic;letter-spacing:-0.344px;color:#3c4046;">Iadaaaa laat aaaada aaaaat a aaaitae Ta</span>
<span class="t s" style="left:445px;top:491.3px;font-size:7px;line-height:8.4px;font-style:italic;letter-spacing:-0.297px;color:#3c4046;">aaaaa ta aagaa aad a laafaaaaa jda</span>
<span class="t s" style="left:445px;top:499.3px;font-size:7px;line-height:8.4px;font-style:italic;letter-spacing:-0.324px;color:#3c4046;">aaaabaa</span>
<span class="t s" style="left:436px;top:507.3px;font-size:7px;line-height:8.4px;font-style:italic;letter-spacing:-0.347px;color:#3c4046;">Claraomad af iaaaaa a baad taadf aaa</span>
<span class="t s" style="left:445px;top:514.8px;font-size:7px;line-height:8.4px;font-style:italic;letter-spacing:0.106px;color:#3c4046;">aaaaa</span>
<span class="t s" style="left:816px;top:113.3px;font-size:9.5px;line-height:11.4px;font-weight:700;letter-spacing:-0.719px;color:#22262c;">Feakaxing</span>
<span class="t s" style="left:841px;top:133.5px;font-size:7.5px;line-height:9.0px;letter-spacing:-0.133px;color:#474c54;">Paaa</span>
<span class="t s" style="left:841px;top:142.0px;font-size:7.5px;line-height:9.0px;letter-spacing:-0.053px;color:#474c54;">Zacp Iaaaa</span>
<span class="t s" style="left:841px;top:150.5px;font-size:7.5px;line-height:9.0px;letter-spacing:-0.322px;color:#474c54;">Taaar Eaaad</span>
<span class="t s" style="left:841px;top:159.5px;font-size:7.5px;line-height:9.0px;letter-spacing:-0.328px;color:#474c54;">Daaaadaa</span>
<span class="t s" style="left:841px;top:168.5px;font-size:7.5px;line-height:9.0px;letter-spacing:0.062px;color:#474c54;">Paaad</span>
<span class="t s" style="left:841px;top:176.5px;font-size:7.5px;line-height:9.0px;letter-spacing:-0.321px;color:#474c54;">Eaabaata Taadd</span>
<span class="t s" style="left:841px;top:185.0px;font-size:7.5px;line-height:9.0px;letter-spacing:-0.253px;color:#3f82c4;">Cpaad latanaatcaatlat aia l</span>
<span class="t s" style="left:841px;top:193.5px;font-size:7.5px;line-height:9.0px;letter-spacing:-0.148px;color:#3f82c4;">Ziaa</span>
<span class="t s" style="left:712px;top:250.3px;font-size:9.5px;line-height:11.4px;font-weight:700;letter-spacing:-0.454px;color:#33302e;">Betreal Tiors</span>
<span class="t s" style="left:733px;top:267.5px;font-size:7.5px;line-height:9.0px;letter-spacing:0.045px;color:#3f444b;">Ir ttbet ratadoi</span>
<span class="t s" style="left:742px;top:277.0px;font-size:7.5px;line-height:9.0px;letter-spacing:-0.345px;color:#3f444b;">Asaadia 1 Vlaas Taanaaa</span>
<span class="t s" style="left:742px;top:285.5px;font-size:7.5px;line-height:9.0px;letter-spacing:-0.366px;color:#3f444b;">Daaaay faaar Aaag</span>
<span class="t s" style="left:742px;top:294.5px;font-size:7.5px;line-height:9.0px;letter-spacing:-0.359px;color:#3f444b;">Edaaadfaaaa Saaatla ala</span>
<span class="t s" style="left:742px;top:304.0px;font-size:7.5px;line-height:9.0px;letter-spacing:-0.265px;color:#3f444b;">Oaaaad Caa daaaaaf Tagl haaal </span>
<span class="t s" style="left:742px;top:312.5px;font-size:7.5px;line-height:9.0px;letter-spacing:-0.337px;color:#3f444b;">Itdadcdaaaadaf</span>
<span class="t s" style="left:742px;top:330.0px;font-size:7.5px;line-height:9.0px;letter-spacing:-0.324px;color:#3f444b;">Daaaadg Iaalaa Saaaaa Dlaa</span>
<span class="t s" style="left:732px;top:321.3px;font-size:7px;line-height:8.4px;font-weight:700;letter-spacing:-0.356px;color:#33383f;">Dnoan</span>
<span class="t s" style="left:701px;top:391.7px;font-size:10.5px;line-height:12.6px;letter-spacing:-0.611px;color:#2e3238;">Comtection</span>
<span class="t s" style="left:723px;top:411.0px;font-size:7.5px;line-height:9.0px;letter-spacing:-0.016px;color:#3f444b;">Pvoibao</span>
<span class="t s" style="left:731px;top:419.8px;font-size:7px;line-height:8.4px;letter-spacing:-0.255px;color:#3f444b;">Daaaaa</span>
<span class="t s" style="left:731px;top:427.8px;font-size:7px;line-height:8.4px;letter-spacing:-0.255px;color:#3f444b;">Taaaaadaafaaaaat Taa</span>
<span class="t s" style="left:731px;top:435.8px;font-size:7px;line-height:8.4px;letter-spacing:-0.252px;color:#3f444b;">Daaaaaad </span>
<span class="t s" style="left:731px;top:443.8px;font-size:7px;line-height:8.4px;letter-spacing:-0.365px;color:#3f444b;">Aaaan Ta Aaaaadaaaaar Iaaafab Daa</span>
<span class="t s" style="left:731px;top:451.8px;font-size:7px;line-height:8.4px;letter-spacing:-0.328px;color:#3f444b;">Daaaaadadaa </span>
<span class="t s" style="left:731px;top:459.3px;font-size:7px;line-height:8.4px;letter-spacing:-0.267px;color:#3f444b;">Vaaar aaa, aa</span>
<span class="t s" style="left:731px;top:466.8px;font-size:7px;line-height:8.4px;letter-spacing:-0.204px;color:#3f444b;">Taadaaaan Faa</span>
<span class="t s" style="left:724px;top:474.8px;font-size:7px;line-height:8.4px;letter-spacing:-0.38px;color:#3f444b;">D aaaaaaac Aaaaaa</span>
<span class="t s" style="left:731px;top:482.3px;font-size:7px;line-height:8.4px;letter-spacing:-0.307px;color:#3f444b;">Sdaaadf ag Taaaal a 1 aaaada Eaaaa</span>
<span class="t s" style="left:731px;top:489.8px;font-size:7px;line-height:8.4px;letter-spacing:-0.379px;color:#3f444b;">aaaaaadaa taaaacaada</span>
<span class="t s" style="left:731px;top:497.3px;font-size:7px;line-height:8.4px;letter-spacing:-0.214px;color:#3f444b;">Fdaaaaa Laaad </span>
<span class="t s" style="left:731px;top:505.3px;font-size:7px;line-height:8.4px;letter-spacing:-0.235px;color:#3f444b;">Paaaa Zaadaaadaaaadaaar T </span>
<span class="t s" style="left:731px;top:513.3px;font-size:7px;line-height:8.4px;letter-spacing:-0.35px;color:#3f444b;">Ladaaaar Taaaa Gaaaa Taaaaaaaaf</span>
<span class="t s" style="left:731px;top:520.8px;font-size:7px;line-height:8.4px;letter-spacing:-0.316px;color:#3f444b;">Daaadadaad dadagjadaa</span>
<span class="t s" style="left:291px;top:158.3px;font-size:9.5px;line-height:11.4px;font-weight:700;letter-spacing:-0.585px;color:#2a2e34;">Aydvics</span>
<span class="t m" style="left:312px;top:174.8px;font-size:9.5px;line-height:11.4px;font-weight:700;letter-spacing:-0.132px;"><span style="color:#8fbce2">oopca</span><span style="color:#d3d8de"> {</span></span>
<span class="t m" style="left:322px;top:184.3px;font-size:9.5px;line-height:11.4px;font-weight:700;letter-spacing:-0.286px;"><span style="color:#8fbce2">efi:</span><span style="color:#d3d8de"> (aete</span><span style="color:#d3d8de"> {</span></span>
<span class="t m" style="left:323px;top:194.3px;font-size:9.5px;line-height:11.4px;font-weight:700;letter-spacing:-0.612px;"><span style="color:#e87e5c">tni</span><span style="color:#b4cfe2"> taeti</span><span style="color:#d3d8de"> {</span></span>
<span class="t m" style="left:335px;top:203.6px;font-size:9.5px;line-height:11.4px;font-weight:700;letter-spacing:-0.703px;"><span style="color:#e87e5c">bc</span><span style="color:#8fbce2">enauat</span><span style="color:#d3d8de">cftiftaflo</span><span style="color:#6dc06e"> Clalal</span></span>
<span class="t m" style="left:342px;top:213.3px;font-size:9.5px;line-height:11.4px;font-weight:700;letter-spacing:-0.89px;"><span style="color:#e87e5c">cnf</span><span style="color:#8fbce2">ialalc</span><span style="color:#e87e5c"> fleel</span><span style="color:#6dc06e"> (ernelcomte:</span><span style="color:#d3d8de"> ())</span></span>
<span class="t m" style="left:344px;top:222.5px;font-size:9.5px;line-height:11.4px;font-weight:700;letter-spacing:-0.203px;"><span style="color:#e87e5c">}</span><span style="color:#d3d8de">teole</span></span>
<span class="t m" style="left:334px;top:230.6px;font-size:9.5px;line-height:11.4px;font-weight:700;color:#e87e5c;">}</span>
<span class="t m" style="left:329px;top:238.8px;font-size:9.5px;line-height:11.4px;font-weight:700;letter-spacing:-0.479px;color:#d3d8de;">fenacstic</span>
<span class="t m" style="left:322px;top:248.3px;font-size:9.5px;line-height:11.4px;font-weight:700;letter-spacing:-0.88px;"><span style="color:#8fbce2">cenaea</span><span style="color:#d3d8de">flevref</span><span style="color:#d3d8de"> {[]</span></span>
<span class="t m" style="left:322px;top:258.3px;font-size:9.5px;line-height:11.4px;font-weight:700;letter-spacing:-0.769px;"><span style="color:#d3d8de">pac(</span><span style="color:#d3d8de"> ic</span><span style="color:#a3adb8"> aagact</span><span style="color:#6dc06e"> (cadtarlarz</span><span style="color:#d3d8de">)]);</span></span>
<span class="t m" style="left:322px;top:268.3px;font-size:9.5px;line-height:11.4px;font-weight:700;letter-spacing:-0.644px;"><span style="color:#d3d8de">oacoa</span><span style="color:#d3d8de"> cleat</span><span style="color:#6dc06e"> anact</span></span>
<span class="t m" style="left:322px;top:278.3px;font-size:9.5px;line-height:11.4px;font-weight:700;letter-spacing:-0.726px;"><span style="color:#d3d8de">Oeo</span><span style="color:#e87e5c">ort</span><span style="color:#d3d8de"> (Eqrweret</span><span style="color:#6dc06e">cenlaeartrate</span><span style="color:#6dc06e">(Cerlbatcnf&quot;</span></span>
<span class="t m" style="left:322px;top:288.3px;font-size:9.5px;line-height:11.4px;font-weight:700;letter-spacing:-0.893px;"><span style="color:#e87e5c">ooqat</span><span style="color:#d3d8de"> = </span><span style="color:#e87e5c">eel</span><span style="color:#d3d8de">(aeriat)</span><span style="color:#d3d8de"> {</span></span>
<span class="t m" style="left:332px;top:301.3px;font-size:9.5px;line-height:11.4px;font-weight:700;letter-spacing:-0.823px;"><span style="color:#a3adb8">eawq:</span><span style="color:#d3d8de"> fcrlanoc</span><span style="color:#d3d8de"> oertctcller</span><span style="color:#d3d8de"> Vol});</span></span>
<span class="t m" style="left:335px;top:309.8px;font-size:9.5px;line-height:11.4px;font-weight:700;letter-spacing:-0.303px;color:#d3d8de;">caaca</span>
<span class="t m" style="left:335px;top:318.8px;font-size:9.5px;line-height:11.4px;font-weight:700;letter-spacing:-0.64px;"><span style="color:#e87e5c">trelc</span><span style="color:#d3d8de"> (tfaclozcterk</span><span style="color:#d3d8de"> cH({</span><span style="color:#6dc06e"> (c</span><span style="color:#d3d8de"> eo);</span></span>
<span class="t m" style="left:329px;top:328.8px;font-size:9.5px;line-height:11.4px;font-weight:700;color:#e87e5c;">}</span>
<span class="t m" style="left:321px;top:336.3px;font-size:9.5px;line-height:11.4px;font-weight:700;color:#d3d8de;">}</span>
<span class="t m" style="left:311.5px;top:348.3px;font-size:9.5px;line-height:11.4px;font-weight:700;color:#d3d8de;">})</span>
<span class="t m" style="left:294.5px;top:176.0px;font-size:7.5px;line-height:9.0px;color:#5b6570;">1</span>
<span class="t m" style="left:294.5px;top:185.5px;font-size:7.5px;line-height:9.0px;color:#5b6570;">2</span>
<span class="t m" style="left:294.5px;top:195.5px;font-size:7.5px;line-height:9.0px;color:#5b6570;">3</span>
<span class="t m" style="left:294.5px;top:204.8px;font-size:7.5px;line-height:9.0px;color:#5b6570;">2</span>
<span class="t m" style="left:280px;top:320.0px;font-size:7.5px;line-height:9.0px;color:#5b6570;">11</span>
<span class="t m" style="left:280px;top:330.0px;font-size:7.5px;line-height:9.0px;color:#5b6570;">12</span>
<span class="t m" style="left:280px;top:337.5px;font-size:7.5px;line-height:9.0px;color:#5b6570;">13</span>
<span class="t m" style="left:280px;top:349.5px;font-size:7.5px;line-height:9.0px;color:#5b6570;">15</span>
</div>
</body>
</html>
